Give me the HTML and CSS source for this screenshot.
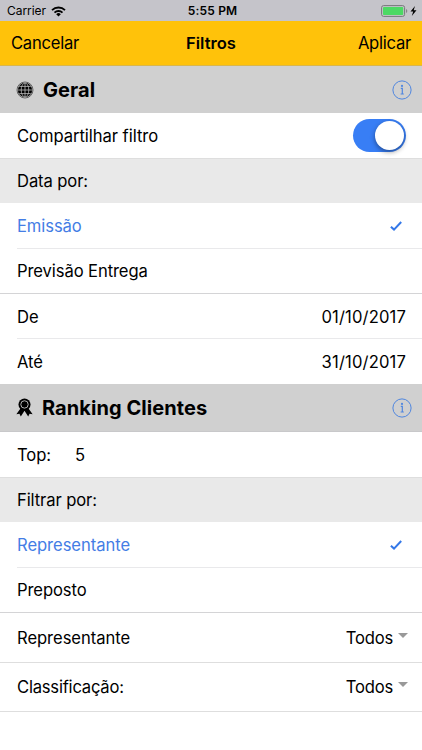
FILE: index.html
```
<!DOCTYPE html>
<html lang="pt-BR">
<head>
<meta charset="utf-8">
<title>Filtros</title>
<link rel="stylesheet" href="styles.css">
</head>
<body>
<div class="status">
  <div class="carrier"><span>Carrier</span>
    <svg class="wifi" viewBox="0 0 15 11" width="15" height="11"><path d="M1 4.1a9.4 9.4 0 0 1 13 0M3.5 6.6a5.8 5.8 0 0 1 8 0" fill="none" stroke="#000" stroke-width="1.8"/><path d="M5.2 8.2a3.3 3.3 0 0 1 4.6 0L7.5 10.6z"/></svg>
  </div>
  <span class="time">5:55 PM</span>
  <div class="power">
    <svg viewBox="0 0 37 12" width="37" height="12"><rect x=".6" y=".6" width="23" height="10.8" rx="2" fill="none" stroke="#77777a" stroke-width="1"/><rect x="2" y="2" width="20.2" height="8" rx=".8" fill="#4cd964"/><path d="M25.2 4v4c1.4-.5 1.4-3.5 0-4z" fill="#77777a"/><path d="M34 1.1 29.5 6.5h2.7l-1.4 4.6 4.7-5.9h-2.8z"/></svg>
  </div>
</div>
<header class="nav"><span class="cancel">Cancelar</span><span class="title">Filtros</span><span class="apply">Aplicar</span></header>
<main>
  <section>
    <div class="head">
      <svg class="globe" viewBox="0 0 18 18" width="18" height="18"><circle cx="9" cy="9" r="7.2"/><circle cx="9" cy="9" r="8" fill="none" stroke="#333" stroke-width=".7"/><g fill="none" stroke="#c4c4c4" stroke-width=".75"><path d="M9 2v14M2 9h14M3.2 5.4h11.6M3.2 12.6h11.6"/><ellipse cx="9" cy="9" rx="3.8" ry="7"/></g></svg>
      <h2 class="geral">Geral</h2>
      <svg class="info" viewBox="0 0 20 20" width="20" height="20"><circle cx="10" cy="10" r="9.1"/><path class="stem" d="M8.8 8.3h1.5v5.6M8.6 14h3.2"/><circle class="dot" cx="10" cy="5.9" r="1.1"/></svg>
    </div>
    <div class="row"><span class="share">Compartilhar filtro</span><span class="switch"><i></i></span></div>
    <div class="row group"><span>Data por:</span></div>
    <div class="row picked inset"><span>Emissão</span><svg class="check" viewBox="0 0 12 10" width="12" height="10"><path d="M.9 5.7 4 8.6 11.2 1"/></svg></div>
    <div class="row full"><span>Previsão Entrega</span></div>
    <div class="row inset"><span>De</span><span class="date">01/10/2017</span></div>
    <div class="row"><span>Até</span><span class="date">31/10/2017</span></div>
  </section>
  <section>
    <div class="head second">
      <svg class="award" viewBox="0 0 16 18" width="17" height="19"><path d="M4.5 9.5.3 15.3l2.9-.3 1.3 2.6L8 12l3.5 5.6 1.3-2.6 2.9.3-4.2-5.8z"/><circle cx="8" cy="6.1" r="5.7"/><circle cx="8" cy="6.1" r="3.5" fill="none" stroke="#cfcfcf" stroke-width=".8"/></svg>
      <h2 class="ranking">Ranking Clientes</h2>
      <svg class="info" viewBox="0 0 20 20" width="20" height="20"><circle cx="10" cy="10" r="9.1"/><path class="stem" d="M8.8 8.3h1.5v5.6M8.6 14h3.2"/><circle class="dot" cx="10" cy="5.9" r="1.1"/></svg>
    </div>
    <div class="row"><span>Top:</span><span class="count">5</span></div>
    <div class="row group"><span>Filtrar por:</span></div>
    <div class="row picked inset"><span class="rep">Representante</span><svg class="check" viewBox="0 0 12 10" width="12" height="10"><path d="M.9 5.7 4 8.6 11.2 1"/></svg></div>
    <div class="row full"><span>Preposto</span></div>
    <div class="row tall"><span class="rep">Representante</span><span class="select">Todos</span><i class="caret"></i></div>
    <div class="row tall last"><span class="classif">Classificação:</span><span class="select">Todos</span><i class="caret"></i></div>
  </section>
</main>
</body>
</html>
```
FILE: styles.css
```
* { box-sizing: border-box; }
body {
  margin: 0;
  width: 422px;
  height: 750px;
  overflow: hidden;
  background: #fff;
  color: #000;
  font: 16.6px/20px Inter, "Liberation Sans", sans-serif;
  white-space: nowrap;
}
svg { display: block; flex: none; }
.status {
  display: grid;
  grid-template-columns: 1fr auto 1fr;
  align-items: center;
  height: 21px;
  padding: 1px 4px 0 7px;
  background: #c5c4ca;
  font-size: 12px;
}
.carrier { display: flex; gap: 5px; align-items: center; letter-spacing: -.05px; }
.time { font-weight: 600; letter-spacing: .2px; }
.power { justify-self: end; }
.nav {
  display: grid;
  grid-template-columns: 1fr auto 1fr;
  align-items: center;
  height: 45px;
  padding: 0 11px;
  background: #ffc20a;
  border-bottom: 1px solid #d8b64e;
}
.cancel, .apply { letter-spacing: -.25px; }
.title { font-weight: 600; }
.apply { justify-self: end; }
.head {
  display: flex;
  align-items: center;
  height: 47px;
  padding: 0 10px 0 16px;
  background: #d0d0d0;
}
.second { height: 48px; border-bottom: 1px solid #c8c8ca; }
h2 { margin: 0; font-size: 20px; line-height: 24px; font-weight: 700; }
.geral { margin-left: 9px; letter-spacing: .1px; }
.ranking { margin-left: 9px; padding-top: 1px; letter-spacing: .06px; }
.info { margin-left: auto; fill: none; stroke: #4f86df; stroke-width: 1; }
.info .stem { stroke-width: 1.2; }
.info .dot { fill: #4f86df; stroke: none; }
.row {
  display: flex;
  align-items: center;
  height: 45px;
  padding: 0 16px 0 17px;
  letter-spacing: -.1px;
}
.group { background: #e9e9e9; border-top: 1px solid #dedede; }
.full { border-bottom: 1px solid #d4d4d6; }
.inset { background: linear-gradient(#e9e9eb, #e9e9eb) 17px 100% / 100% 1px no-repeat; }
.picked { height: 46px; color: #447de5; padding-right: 20px; }
.share, .rep { letter-spacing: -.05px; }
.classif { letter-spacing: -.22px; }
.check { margin-left: auto; fill: none; stroke: #3478e8; stroke-width: 2; }
.date { margin-left: auto; letter-spacing: .15px; }
.switch {
  width: 53px;
  height: 33px;
  margin-left: auto;
  padding: 2px;
  border-radius: 17px;
  background: #387ef5;
}
.switch i {
  display: block;
  width: 29px;
  height: 29px;
  margin-left: auto;
  border-radius: 50%;
  background: #fff;
  box-shadow: 0 2px 5px rgba(0, 0, 0, .4);
}
.count { margin-left: 24px; }
.tall { height: 50px; padding-right: 14px; border-bottom: 1px solid #dedede; }
.last { height: 49px; }
.select { margin-left: auto; letter-spacing: -.2px; }
.caret {
  margin: -5px 0 0 5px;
  border: 5px solid transparent;
  border-top-color: #999;
  border-bottom: 0;
}
```
